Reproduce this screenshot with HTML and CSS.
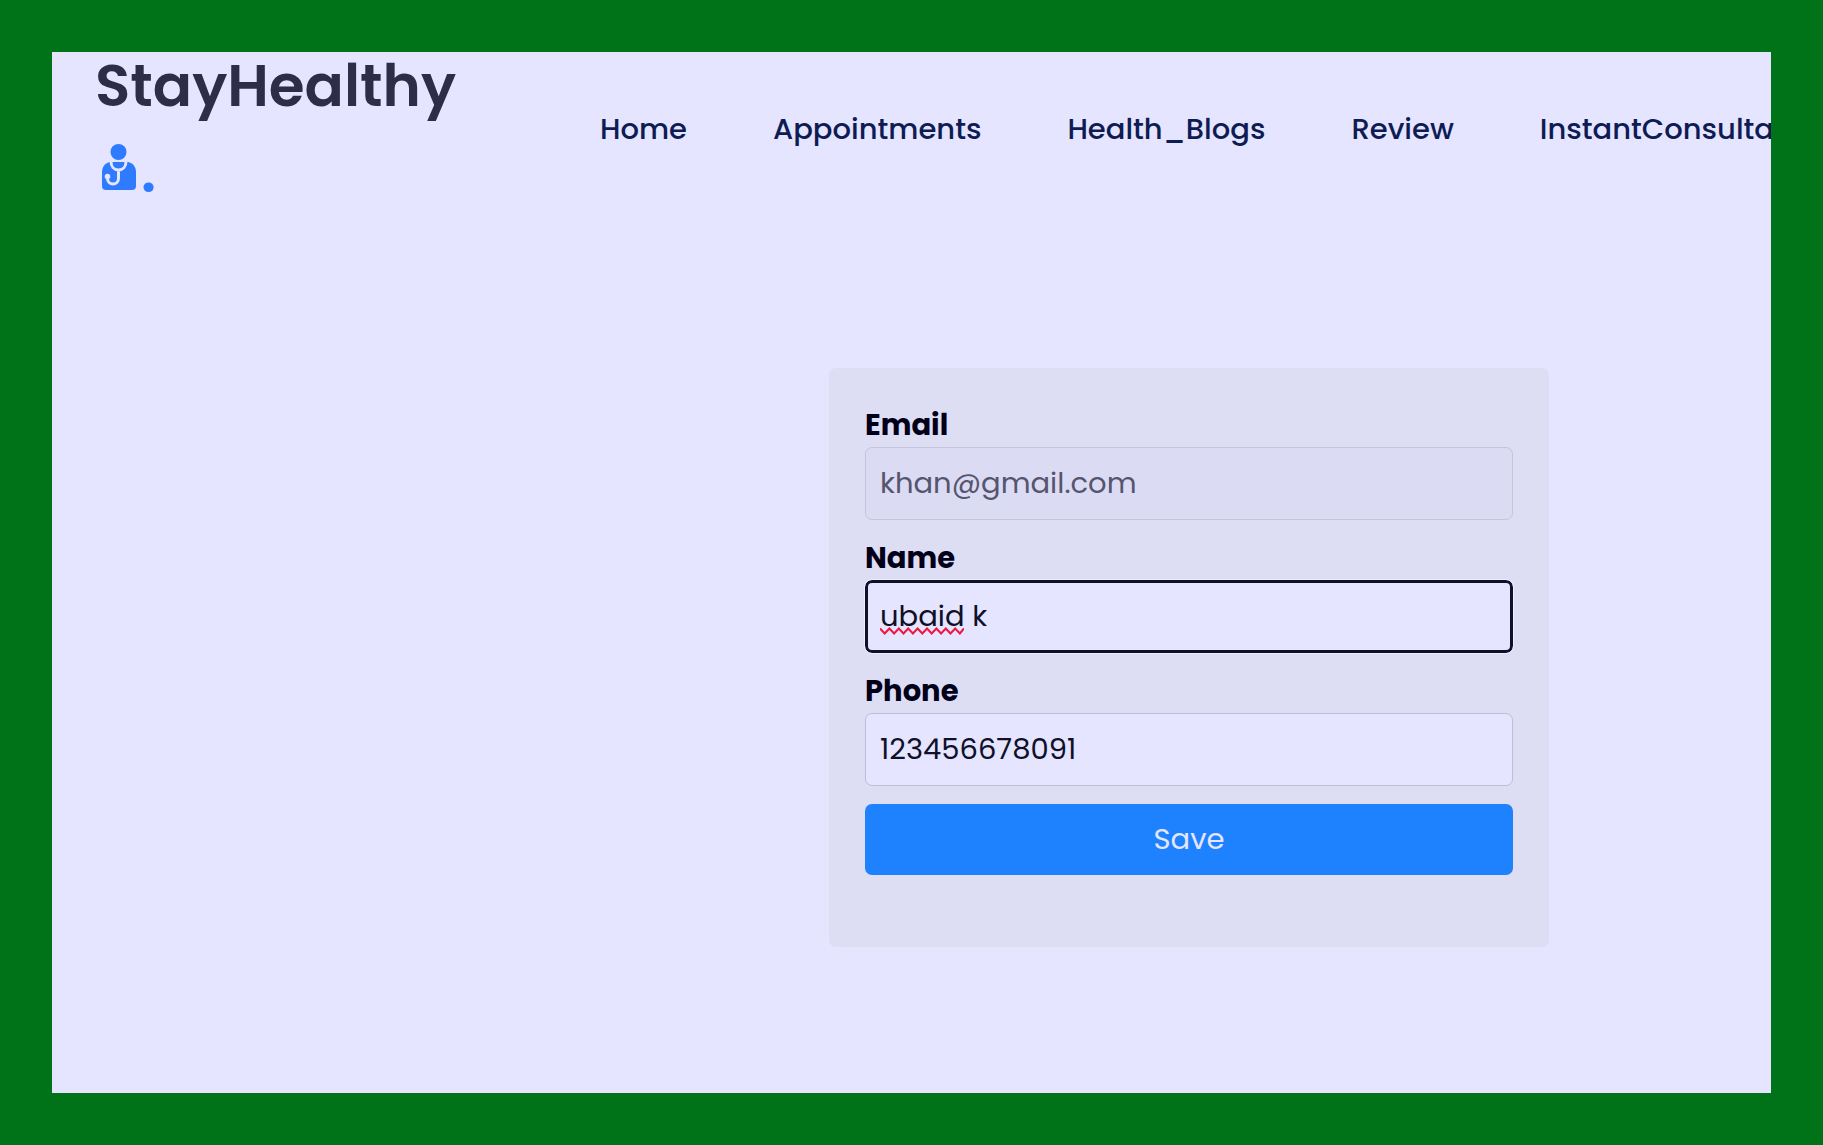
FILE: index.html
```html
<!DOCTYPE html>
<html lang="en">
<head>
<meta charset="utf-8">
<meta name="viewport" content="width=device-width, initial-scale=1">
<title>StayHealthy</title>
<link rel="stylesheet" href="styles.css">
</head>
<body>
<div class="screen">
  <header class="navbar">
    <a class="logo" href="#">StayHealthy
      <span class="logo-mark"><svg class="doctor" viewBox="0 0 44 48" aria-hidden="true">
        <circle cx="21.5" cy="8" r="8"/>
        <path d="M13 18C8 19 5 23 5 28v14a4 4 0 0 0 4 4h26a4 4 0 0 0 4-4V28c0-5-3-9-8-10z"/>
        <path class="tube" d="M14 17.500c0 5 3 8.500 7.500 8.500s7.500-3.500 7.500-8.500M21.500 26v8.500a5.500 5.500 0 0 1-11 0V33"/>
        <circle class="bell" cx="10.500" cy="32.500" r="2.800"/>
      </svg>.</span>
    </a>
    <nav class="links">
      <a href="#">Home</a>
      <a href="#">Appointments</a>
      <a href="#">Health_Blogs</a>
      <a href="#">Review</a>
      <a href="#">InstantConsultation</a>
    </nav>
  </header>
  <main class="content">
    <form class="profile">
      <div class="field">
        <label for="email">Email</label>
        <input id="email" type="email" value="khan@gmail.com" disabled>
      </div>
      <div class="field">
        <label for="name">Name</label>
        <div class="control">
          <input class="active" id="name" type="text" value="ubaid k">
          <svg class="squiggle" viewBox="0 0 84 8" aria-hidden="true"><path d="M0 1.500L4.700 6.500L9.400 1.500L14.100 6.500L18.800 1.500L23.500 6.500L28.200 1.500L32.900 6.500L37.600 1.500L42.300 6.500L47 1.500L51.700 6.500L56.400 1.500L61.100 6.500L65.800 1.500L70.500 6.500L75.200 1.500L79.900 6.500L84 1.500"/></svg>
        </div>
      </div>
      <div class="field">
        <label for="phone">Phone</label>
        <input id="phone" type="tel" value="123456678091">
      </div>
      <button type="button">Save</button>
    </form>
  </main>
</div>
</body>
</html>
```
FILE: styles.css
```css
* {
  box-sizing: border-box;
}

body {
  margin: 0;
  min-height: 100vh;
  display: flex;
  padding: 52px;
  background: #007319;
  font-family: Poppins, Inter, sans-serif;
  font-size: 29px;
  line-height: 43px;
}

.screen {
  flex: 1;
  min-width: 0;
  overflow: hidden;
  background: #e5e5ff;
}

.navbar {
  display: flex;
  align-items: center;
  height: 154px;
  padding-left: 43px;
}

.logo {
  flex: none;
  width: 505px;
  color: #2d2d48;
  font-size: 58px;
  font-weight: 600;
  line-height: 86px;
  text-decoration: none;
}

.logo-mark {
  display: block;
  padding-left: 2px;
  color: #2f7bff;
}

.doctor {
  width: 44px;
  height: 48px;
  overflow: visible;
  fill: #2f7bff;
}

.doctor .tube {
  fill: none;
  stroke: #e5e5ff;
  stroke-width: 3;
}

.doctor .bell {
  fill: #e5e5ff;
}

.links {
  display: flex;
  gap: 86px;
}

.links a {
  color: #0f1c54;
  font-weight: 500;
  text-decoration: none;
  white-space: nowrap;
}

.content {
  display: flex;
  justify-content: flex-end;
  padding: 162px 222px 0 0;
}

.profile {
  width: 720px;
  padding: 36px 36px 72px;
  border-radius: 7px;
  background: #ddddf4;
}

.field {
  display: flex;
  flex-direction: column;
  margin-bottom: 18px;
}

.field + .field {
  margin-top: -1px;
}

label {
  color: #000018;
  font-weight: 700;
}

.control {
  position: relative;
}

input {
  display: block;
  width: 100%;
  height: 73px;
  padding: 0 14px;
  border: 1px solid #bdbdd7;
  border-radius: 7px;
  background: #e5e5ff;
  color: #101028;
  font: inherit;
}

input:disabled {
  background: #dbdbf3;
  border-color: #c4c4dd;
  color: #55556f;
}

input.active {
  padding: 0 12px;
  border: 3px solid #101028;
  outline: 1px solid #ededff;
}

.squiggle {
  position: absolute;
  left: 15px;
  bottom: 18px;
  width: 84px;
  height: 8px;
  fill: none;
  stroke: #f0163c;
  stroke-width: 2;
}

button {
  display: block;
  width: 100%;
  height: 71px;
  border: 0;
  border-radius: 7px;
  background: #1e82ff;
  color: #e5e5ff;
  font: inherit;
}
```
